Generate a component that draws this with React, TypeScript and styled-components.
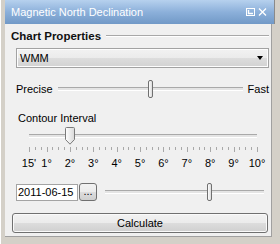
import React from "react";
import styled, { createGlobalStyle } from "styled-components";

const GlobalStyle = createGlobalStyle`
	html, body {
		margin: 0;
		padding: 0;
		background: #d4d0c8;
	}

	body {
		font-family: "Liberation Sans", Arial, sans-serif;
		font-size: 11px;
		color: #000;
	}
`;

const scaleStart = 0.25;
const scaleEnd = 10;
const majorLabels = [
	{ value: 0.25, text: "15'" },
	{ value: 1, text: "1°" },
	{ value: 2, text: "2°" },
	{ value: 3, text: "3°" },
	{ value: 4, text: "4°" },
	{ value: 5, text: "5°" },
	{ value: 6, text: "6°" },
	{ value: 7, text: "7°" },
	{ value: 8, text: "8°" },
	{ value: 9, text: "9°" },
	{ value: 10, text: "10°" },
];

function toPercent(value: number) {
	return ((value - scaleStart) / (scaleEnd - scaleStart)) * 100;
}

function TitleIcons() {
	return (
		<svg width="22" height="9" viewBox="0 0 22 9">
			<rect x="0.5" y="0.5" width="8" height="7" fill="none" stroke="#fff" />
			<path d="M2.5 2 V5.5 H7" fill="none" stroke="#fff" strokeWidth="1.4" />
			<path d="M13 0.5 L20 7.5 M20 0.5 L13 7.5" stroke="#fff" strokeWidth="1.3" />
		</svg>
	);
}

function TickScale() {
	const ticks = [];
	const count = (scaleEnd - scaleStart) / 0.25;
	for (let i = 0; i <= count; i++) {
		const value = scaleStart + i * 0.25;
		const x = Math.round((i / count) * 228) + 0.5;
		const major = Number.isInteger(value) || i === 0;
		ticks.push(
			<line
				key={i}
				x1={x}
				x2={x}
				y1={0}
				y2={major ? 5 : 3}
				stroke="#a8a8a8"
				strokeWidth="1"
			/>
		);
	}
	return (
		<svg width="230" height="6" viewBox="0 0 230 6">
			{ticks}
		</svg>
	);
}

function App() {
	return (
		<>
			<GlobalStyle />
			<Window>
				<TitleBar>
					<Title>Magnetic North Declination</Title>
					<TitleIcons />
				</TitleBar>
				<Body>
					<GroupHeader>
						<GroupTitle>Chart Properties</GroupTitle>
						<GroupRule />
					</GroupHeader>

					<Combo>
						<span>WMM</span>
						<ComboArrow />
					</Combo>

					<SpeedRow>
						<span>Precise</span>
						<Slider>
							<Track />
							<Thumb style={{ left: "50%" }} />
						</Slider>
						<span>Fast</span>
					</SpeedRow>

					<FieldLabel>Contour Interval</FieldLabel>

					<ScaleBlock>
						<Slider>
							<Track />
							<PointerThumb style={{ left: `${toPercent(2)}%` }}>
								<svg width="10" height="18" viewBox="0 0 10 18">
									<defs>
										<linearGradient id="pt" x1="0" y1="0" x2="1" y2="0">
											<stop offset="0" stopColor="#ffffff" />
											<stop offset="1" stopColor="#d8d8d8" />
										</linearGradient>
									</defs>
									<path
										d="M1.5 0.5 H8.5 Q9.5 0.5 9.5 1.5 V12.5 L5 17.2 L0.5 12.5 V1.5 Q0.5 0.5 1.5 0.5 Z"
										fill="url(#pt)"
										stroke="#7a7a7a"
									/>
								</svg>
							</PointerThumb>
						</Slider>
						<Ticks>
							<TickScale />
						</Ticks>
						<ScaleLabels>
							{majorLabels.map((label) => (
								<ScaleLabel
									key={label.text}
									style={{ left: `${toPercent(label.value)}%` }}
								>
									{label.text}
								</ScaleLabel>
							))}
						</ScaleLabels>
					</ScaleBlock>

					<DateRow>
						<DateInput>2011-06-15</DateInput>
						<SmallButton>...</SmallButton>
						<Slider>
							<Track />
							<Thumb style={{ left: "65.3%" }} />
						</Slider>
					</DateRow>

					<Button>Calculate</Button>
				</Body>
			</Window>
		</>
	);
}

const Window = styled.div`
	width: 280px;
	height: 244px;
	box-sizing: border-box;
	padding: 0 5px 7px 4px;
	display: flex;
	flex-direction: column;
	background: #d4d0c8;
	border-left: 1px solid #fff;
`;

const TitleBar = styled.div`
	height: 24px;
	flex-shrink: 0;
	display: flex;
	align-items: center;
	justify-content: space-between;
	padding: 0 6px 0 6px;
	background: linear-gradient(#b6d1ee, #8cb0da 50%, #7199c7);
	border-right: 1px solid #8a8a8a;
`;

const Title = styled.span`
	color: #fff;
	font-size: 11px;
	line-height: 1;
	margin-top: 1px;
`;

const Body = styled.div`
	flex: 1;
	display: flex;
	flex-direction: column;
	padding: 0 2px 0 6px;
	margin-right: 3px;
	background: #f0f0f0;
	border-right: 1px solid #a0a0a0;
	border-bottom: 1px solid #a0a0a0;
`;

const GroupHeader = styled.div`
	display: flex;
	align-items: center;
	gap: 5px;
	height: 14px;
	margin-top: 5px;
`;

const GroupTitle = styled.span`
	font-weight: bold;
	font-size: 11.5px;
	color: #111;
`;

const GroupRule = styled.div`
	flex: 1;
	height: 1px;
	background: #a8a8a8;
	border-bottom: 1px solid #fff;
`;

const Combo = styled.div`
	height: 20px;
	flex-shrink: 0;
	margin: 5px 0 0 5px;
	box-sizing: border-box;
	display: flex;
	align-items: center;
	justify-content: space-between;
	padding: 0 5px 0 3px;
	border: 1px solid #a2a2a2;
	box-shadow: inset 0 0 0 1px #fdfdfd;
	background: linear-gradient(#f2f2f2 0, #ebebeb 50%, #dddddd 50%, #d2d2d2 100%);
`;

const ComboArrow = styled.span`
	width: 0;
	height: 0;
	border-left: 3.5px solid transparent;
	border-right: 3.5px solid transparent;
	border-top: 4px solid #000;
`;

const Slider = styled.div`
	position: relative;
	flex: 1 0 auto;
	min-height: 18px;
	display: flex;
	align-items: center;
`;

const Track = styled.div`
	width: 100%;
	height: 2px;
	border-top: 1px solid #a9a9a9;
	background: #e4e4e4;
	border-bottom: 1px solid #fff;
`;

const Thumb = styled.div`
	position: absolute;
	top: 0;
	width: 5px;
	height: 18px;
	box-sizing: border-box;
	margin-left: -2px;
	border: 1px solid #707070;
	border-radius: 2px;
	background: linear-gradient(90deg, #fdfdfd, #dcdcdc);
`;

const PointerThumb = styled.div`
	position: absolute;
	top: 0;
	margin-left: -5px;
	height: 18px;

	& svg {
		display: block;
	}
`;

const SpeedRow = styled.div`
	height: 18px;
	flex-shrink: 0;
	margin: 12px 0 0 5px;
	display: flex;
	align-items: center;
	gap: 5px;
`;

const FieldLabel = styled.div`
	height: 14px;
	flex-shrink: 0;
	line-height: 14px;
	margin: 13px 0 0 7px;
`;

const ScaleBlock = styled.div`
	display: flex;
	flex-shrink: 0;
	flex-direction: column;
	margin: 2px 12px 0 18px;
`;

const Ticks = styled.div`
	margin-top: 2px;
	height: 6px;

	& svg {
		display: block;
	}
`;

const ScaleLabels = styled.div`
	position: relative;
	height: 12px;
	margin-top: 4px;
`;

const ScaleLabel = styled.span`
	position: absolute;
	top: 0;
	transform: translateX(-50%);
	line-height: 12px;
	white-space: nowrap;
`;

const DateRow = styled.div`
	height: 18px;
	flex-shrink: 0;
	margin: 14px 5px 0 5px;
	display: flex;
	align-items: center;
`;

const DateInput = styled.div`
	width: 62px;
	height: 17px;
	box-sizing: border-box;
	padding-left: 1px;
	line-height: 15px;
	background: #fff;
	border: 1px solid #a4a4a4;
`;

const SmallButton = styled.div`
	width: 18px;
	height: 18px;
	box-sizing: border-box;
	margin: 0 8px 0 1px;
	display: flex;
	align-items: center;
	justify-content: center;
	padding-bottom: 3px;
	border: 1px solid #707070;
	border-radius: 3px;
	background: linear-gradient(#f2f2f2 0, #ebebeb 50%, #dddddd 50%, #cfcfcf 100%);
`;

const Button = styled.div`
	height: 20px;
	flex-shrink: 0;
	margin: 12px 1px 0 1px;
	box-sizing: border-box;
	display: flex;
	align-items: center;
	justify-content: center;
	border: 1px solid #707070;
	border-radius: 3px;
	box-shadow: inset 0 0 0 1px #fafafa;
	background: linear-gradient(#f2f2f2 0, #ebebeb 50%, #dddddd 50%, #cfcfcf 100%);
`;

export default App;
